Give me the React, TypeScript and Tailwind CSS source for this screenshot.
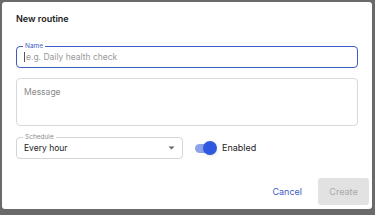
export default function App() {
  return (
    <div
      className="h-[215px] w-[375px] bg-[#6a6a6a] pt-[2px] pr-[3px] pb-[6px] pl-[2px]"
      style={{ fontFamily: 'Inter, "Noto Sans", sans-serif' }}
    >
      <div className="flex h-full flex-col rounded-[3px] bg-white px-[14px] pt-[10px]">
        <h2 className="text-[9px] font-semibold leading-[14px] text-[#222]">New routine</h2>

        <div className="relative mt-[20px] h-[22px] rounded-[4px] border-[1.5px] border-[#3f5bc6]">
          <span className="absolute -top-[6px] left-[6px] bg-white px-[2px] text-[6.5px] leading-[10px] text-[#3f5bc6]">
            Name
          </span>
          <div className="flex h-full items-center pl-[7px] text-[8.5px] text-[#9a9a9a]">
            <span className="mr-[1px] h-[10px] w-[1px] bg-[#555]" />
            e.g. Daily health check
          </div>
        </div>

        <div className="mt-[10px] h-[48px] rounded-[4px] border border-[#d9d9d9] px-[7px] pt-[7px] text-[8.5px] leading-[12px] text-[#8a8a8a]">
          Message
        </div>

        <div className="mt-[11px] flex items-center">
          <div className="relative h-[22px] w-[167px] rounded-[4px] border border-[#d4d4d4]">
            <span className="absolute -top-[6px] left-[6px] bg-white px-[2px] text-[6.5px] leading-[10px] text-[#8a8a8a]">
              Schedule
            </span>
            <div className="flex h-full items-center justify-between pl-[7px] pr-[7px] text-[8.5px] text-[#222]">
              Every hour
              <svg width="7" height="4" viewBox="0 0 7 4">
                <path d="M0.5 0.5 L3.5 3.5 L6.5 0.5 Z" fill="#666" />
              </svg>
            </div>
          </div>

          <div className="ml-[12px] flex items-center">
            <div className="relative h-[9px] w-[20px] rounded-full bg-[#8ea4ea]">
              <div className="absolute -top-[2.5px] right-[-2px] h-[14px] w-[14px] rounded-full bg-[#2f5ae0] shadow-sm" />
            </div>
            <span className="ml-[7px] text-[9px] text-[#222]">Enabled</span>
          </div>
        </div>

        <div className="mt-auto mb-[4px] flex items-center justify-end">
          <button className="mr-[16px] text-[9px] text-[#3f5bc6]">Cancel</button>
          <button className="mr-[-11px] h-[27px] w-[51px] rounded-[3px] bg-[#e2e2e2] text-[9px] text-[#a9a9a9]">
            Create
          </button>
        </div>
      </div>
    </div>
  );
}
